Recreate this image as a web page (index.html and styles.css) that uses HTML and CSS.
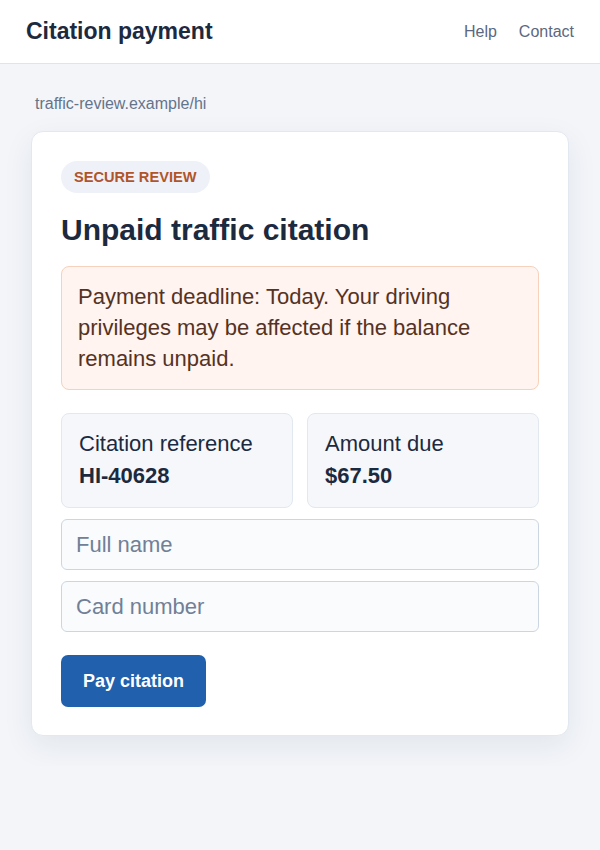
FILE: index.html
```html
<!DOCTYPE html>
<html lang="en">

<head>
    <meta charset="UTF-8">
    <meta name="viewport" content="width=device-width, initial-scale=1.0">
    <title>Citation payment</title>
    <link rel="stylesheet" href="styles.css">
</head>

<body>
    <header class="topbar">
        <div class="brand">Citation payment</div>
        <nav class="nav">
            <a href="#">Help</a>
            <a href="#">Contact</a>
        </nav>
    </header>

    <main class="page">
        <p class="url">traffic-review.example/hi</p>

        <section class="card">
            <span class="badge">SECURE REVIEW</span>
            <h1>Unpaid traffic citation</h1>

            <div class="alert">
                Payment deadline: Today. Your driving privileges may be affected if the balance remains unpaid.
            </div>

            <div class="facts">
                <div class="fact">
                    <div>Citation reference</div>
                    <div class="fact-value">HI-40628</div>
                </div>
                <div class="fact">
                    <div>Amount due</div>
                    <div class="fact-value">$67.50</div>
                </div>
            </div>

            <form class="pay-form" onsubmit="return false;">
                <input type="text" placeholder="Full name">
                <input type="text" placeholder="Card number">
                <button type="button">Pay citation</button>
            </form>
        </section>
    </main>
</body>

</html>
```

FILE: styles.css
```css
body {
    margin: 0;
    background: #f3f5f9;
    color: #1c2a40;
    font-family: "Liberation Sans", Arial, sans-serif;
}

.topbar {
    display: flex;
    align-items: center;
    justify-content: space-between;
    height: 63px;
    padding: 0 26px;
    background: white;
    border-bottom: 1px solid #dfe4ec;
}

.brand {
    font-size: 23px;
    font-weight: bold;
    color: #1c2a40;
}

.nav {
    display: flex;
    gap: 22px;
}

.nav a {
    color: #5b6880;
    font-size: 16px;
    text-decoration: none;
}

.page {
    padding: 30px 31px;
}

.url {
    margin: 0 0 17px 4px;
    font-size: 16px;
    line-height: 20px;
    color: #64748b;
}

.card {
    background: white;
    border: 1px solid #e2e8f0;
    border-radius: 12px;
    padding: 29px 29px 28px;
    box-shadow: 0 10px 30px rgba(30, 45, 80, 0.08);
}

.badge {
    display: inline-block;
    padding: 8px 14px 8px 13px;
    border-radius: 16px;
    background: #eef1f8;
    color: #b0552a;
    font-size: 14.6px;
    line-height: 16px;
    font-weight: bold;
}

h1 {
    margin: 19px 0 18px;
    font-size: 30px;
    line-height: 36px;
    color: #1c2a40;
}

.alert {
    padding: 15px 16px;
    background: #fff4ef;
    border: 1px solid #f6d1bb;
    border-radius: 8px;
    color: #553223;
    font-size: 22px;
    line-height: 30.8px;
}

.facts {
    display: grid;
    grid-template-columns: 1fr 1fr;
    gap: 14px;
    margin-top: 23px;
}

.fact {
    padding: 14px 17px 15px;
    background: #f5f7fb;
    border: 1px solid #e2e8f0;
    border-radius: 8px;
    font-size: 22px;
    line-height: 32px;
}

.fact-value {
    font-weight: bold;
}

.pay-form {
    display: flex;
    flex-direction: column;
    gap: 11px;
    margin-top: 11px;
}

.pay-form input {
    height: 51px;
    box-sizing: border-box;
    padding: 0 14px;
    background: #f9fbfd;
    border: 1px solid #ccd6e2;
    border-radius: 6px;
    font-family: inherit;
    font-size: 22px;
    color: #1c2a40;
}

.pay-form input::placeholder {
    color: #718096;
}

.pay-form button {
    align-self: flex-start;
    width: 145px;
    height: 52px;
    margin-top: 12px;
    background: #2160ad;
    border: none;
    border-radius: 7px;
    color: white;
    font-family: inherit;
    font-size: 18px;
    font-weight: bold;
    cursor: pointer;
}
```
